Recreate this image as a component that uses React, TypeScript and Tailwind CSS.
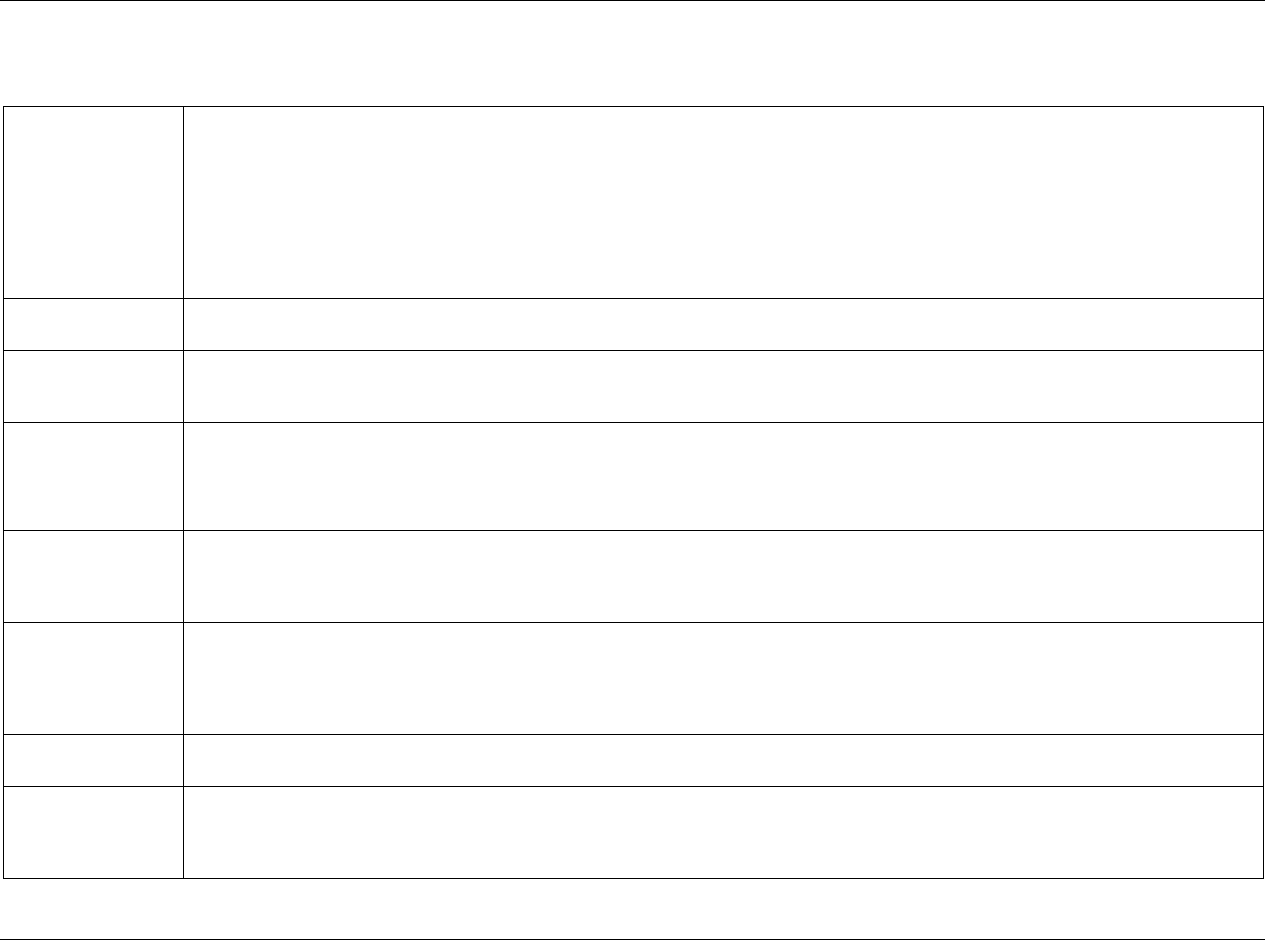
const rows = [
  "h-[192px]",
  "h-[52px]",
  "h-[72px]",
  "h-[108px]",
  "h-[92px]",
  "h-[112px]",
  "h-[52px]",
  "h-[91px]",
];

export default function App() {
  return (
    <main className="w-[1266px] h-[940px] bg-white flex flex-col" style={{ fontFamily: '"Liberation Sans", Arial, sans-serif' }}>
      <div className="h-px w-[1265px] bg-black" />

      <div className="mt-[105px] ml-[3px] w-[1261px] border border-black flex flex-col">
        {rows.map((h, i) => (
          <div key={i} className={`${h} flex ${i < rows.length - 1 ? "border-b border-black" : ""}`}>
            <div className="w-[180px] border-r border-black" />
            <div className="flex-1" />
          </div>
        ))}
      </div>

      <div className="mt-auto h-px w-[1265px] bg-black" />
    </main>
  );
}
